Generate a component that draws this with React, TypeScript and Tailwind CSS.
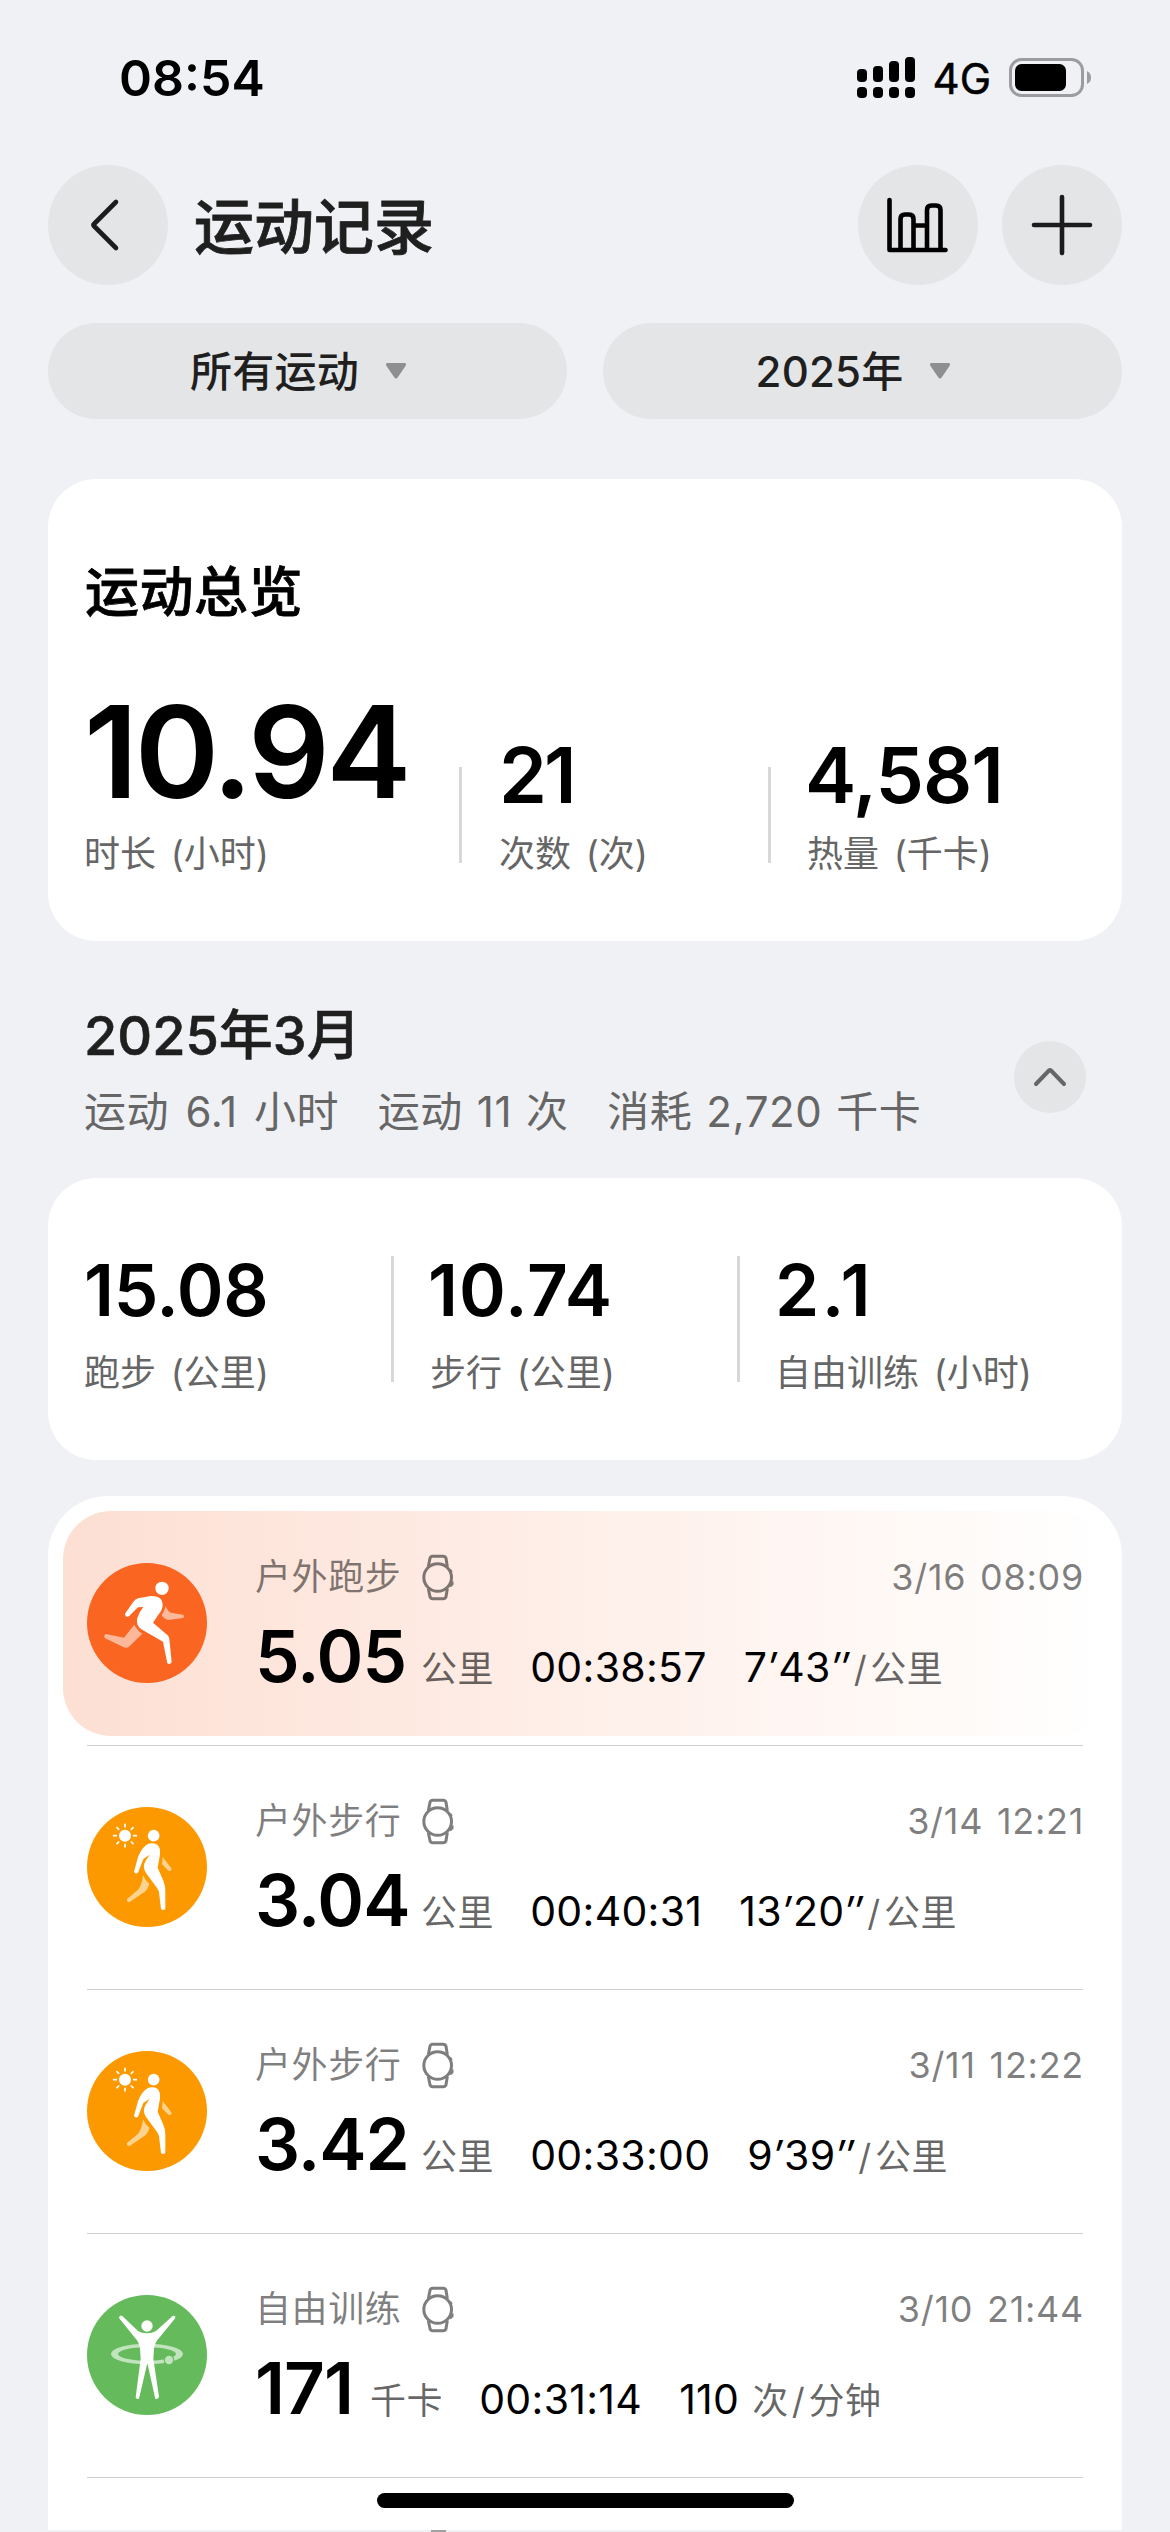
import React from "react";

type Activity = "run" | "walk" | "free";

interface Entry {
  kind: Activity;
  name: string;
  date: string;
  value: string;
  valueWidth: string;
  unit: string;
  time: string;
  rate: string[];
  rateUnit: [string, string];
}

const wide = "w-[152px]";
const narrow = "w-[101px]";

const entries: Entry[] = [
  { kind: "run", name: "户外跑步", date: "3/16 08:09", value: "5.05", valueWidth: wide, unit: "公里", time: "00:38:57", rate: ["7", "′", "43", "″"], rateUnit: ["", "公里"] },
  { kind: "walk", name: "户外步行", date: "3/14 12:21", value: "3.04", valueWidth: wide, unit: "公里", time: "00:40:31", rate: ["13", "′", "20", "″"], rateUnit: ["", "公里"] },
  { kind: "walk", name: "户外步行", date: "3/11 12:22", value: "3.42", valueWidth: wide, unit: "公里", time: "00:33:00", rate: ["9", "′", "39", "″"], rateUnit: ["", "公里"] },
  { kind: "free", name: "自由训练", date: "3/10 21:44", value: "171", valueWidth: narrow, unit: "千卡", time: "00:31:14", rate: ["110"], rateUnit: ["次", "分钟"] },
];

function RunIcon() {
  return (
    <svg viewBox="21 39 360 360" className="size-[120px] shrink-0">
      <circle cx="201" cy="219" r="180" fill="#fb6522" />
      <g fill="#fdb89a">
        <path d="M257 168 Q262 184 273 188 L309 194 Q316 199 309 204 L265 210 Q250 206 245 196 Q253 184 257 168Z" />
        <path d="M163 224 Q170 240 187 251 L147 290 Q140 296 130 291 L75 265 Q69 256 78 252 L132 263Z" />
      </g>
      <g fill="#fff">
        <circle cx="246" cy="115" r="20" />
        <path d="M174 145 L213 138 Q246 137 248 161 Q249 178 234 196 L219 218 L262 255 Q267 260 268 267 L275 337 Q270 345 262 340 L249 275 L184 238 Q166 225 172 204 Q178 185 190 171 L174 172 L147 199 Q136 204 135 191 L160 155 Q166 147 174 145Z" />
      </g>
    </svg>
  );
}

function WalkIcon() {
  return (
    <svg viewBox="21 771 360 360" className="size-[120px] shrink-0">
      <circle cx="201" cy="951" r="180" fill="#fd9900" />
      <circle cx="135" cy="857" r="18" fill="#fff" />
      <g stroke="#fff" strokeWidth="5" strokeLinecap="round">
        <path d="M135 823v8M135 883v8M101 857h8M161 857h8M111 833l5 5M154 876l5 5M159 833l-5 5M116 876l-5 5" />
      </g>
      <g fill="#fed28f">
        <path d="M248 921 L275 956 Q275 965 266 963 L246 943Z" />
        <path d="M189 976 Q194 990 208 1001 Q204 1018 193 1026 L149 1056 Q139 1057 141 1047 L174 1019 Q186 1005 189 976Z" />
      </g>
      <g fill="#fff">
        <circle cx="221" cy="857" r="17.5" />
        <path d="M206 881 Q221 877 232 884 Q242 893 240 913 L233 953 L250 992 Q256 1006 256 1022 L256 1076 Q250 1084 243 1077 L237 1027 Q235 1019 229 1011 L198 969 Q186 950 197 932 L209 914 L190 927 L174 968 Q166 974 162 965 L174 921 Q187 888 206 881Z" />
      </g>
    </svg>
  );
}

function FreeIcon() {
  return (
    <svg viewBox="51 44 360 360" className="size-[120px] shrink-0">
      <circle cx="231" cy="224" r="180" fill="#65bb5c" />
      <path
        fillRule="evenodd"
        fill="#c1e4be"
        d="M123 221 A108 31 0 1 0 339 221 A108 31 0 1 0 123 221Z M144 221 A87 20 0 1 1 318 221 A87 20 0 1 1 144 221Z"
      />
      <circle cx="297" cy="239" r="16" fill="#65bb5c" />
      <circle cx="297" cy="239" r="12.5" fill="#c1e4be" />
      <g fill="#fff">
        <circle cx="231" cy="137" r="17" />
        <path d="M147 113 Q149 103 157 107 L204 152 Q214 159 231 159 Q247 159 258 152 L308 107 Q317 104 316 113 L270 170 Q254 186 252 205 L250 235 L267 349 Q265 357 256 356 L232 248 L207 355 Q199 358 197 351 L212 235 L210 205 Q208 186 193 170Z" />
      </g>
    </svg>
  );
}

function WatchIcon() {
  return (
    <svg viewBox="1026 16 96 140" className="h-[47px] w-8 shrink-0 opacity-50" fill="none" stroke="#000" strokeWidth="9">
      <path d="M1045 54 L1050 28 Q1052 22 1058 22 H1089 Q1096 22 1098 28 L1102 54 M1045 119 L1050 144 Q1052 150 1058 150 H1089 Q1096 150 1098 144 L1102 119" />
      <circle cx="1073" cy="86" r="41.500" />
      <path d="M1110 62 L1115 70 M1117 98 V106 L1110 113" strokeWidth="7" />
    </svg>
  );
}

function ActivityIcon({ kind }: { kind: Activity }) {
  if (kind === "run") return <RunIcon />;
  if (kind === "walk") return <WalkIcon />;
  return <FreeIcon />;
}

function StatusBar() {
  return (
    <div className="flex h-[165px] shrink-0 justify-between pl-[119px] pr-[77px]">
      <div className="mt-[48px] h-[60px] text-[50px] leading-[60px] font-semibold text-black">08:54</div>
      <div className="mt-[56px] flex h-[44px]">
        <svg viewBox="0 0 58 42" className="h-[42px] w-[58px]">
          <rect x="0" y="13" width="10" height="13" rx="4" />
          <rect x="16" y="10" width="10" height="16" rx="4" />
          <rect x="32" y="5" width="10" height="21" rx="4" />
          <rect x="48" y="1" width="10" height="25" rx="4" />
          <rect x="0" y="31" width="10" height="11" rx="4" />
          <rect x="16" y="31" width="10" height="11" rx="4" />
          <rect x="32" y="31" width="10" height="11" rx="4" />
          <rect x="48" y="31" width="10" height="11" rx="4" />
        </svg>
        <div className="ml-[18px] text-[42px] leading-[46px] text-black [-webkit-text-stroke:0.5px_#000]">4G</div>
        <svg viewBox="0 0 84 42" className="ml-[18px] h-[42px] w-[84px]">
          <rect x="1.5" y="3.5" width="72" height="36" rx="11" fill="none" stroke="#9b9ba0" strokeWidth="3" />
          <rect x="6" y="8" width="51" height="27" rx="6.5" />
          <path d="M78 15 Q82 17 82 21.5 Q82 26 78 28Z" fill="#9b9ba0" />
        </svg>
      </div>
    </div>
  );
}

function Header() {
  return (
    <div className="flex h-[120px] shrink-0 items-center px-12">
      <div className="flex size-[120px] items-center justify-center rounded-full bg-[#e4e5e7]">
        <svg viewBox="0 0 120 120" className="size-[120px]" fill="none" stroke="#1c1c1e" strokeWidth="4.6" strokeLinecap="round" strokeLinejoin="round">
          <path d="M68 37 L46 59 Q45 60 46 61 L68 83" />
        </svg>
      </div>
      <div className="ml-[26px] pt-[4px] text-[60px] leading-[80px] font-medium text-[#1f1f1f] [-webkit-text-stroke:0.8px_#1f1f1f]">运动记录</div>
      <div className="ml-auto flex gap-6">
        <div className="flex size-[120px] items-center justify-center rounded-full bg-[#e4e5e7]">
          <svg viewBox="0 0 120 120" className="size-[120px]" fill="none" stroke="#000" strokeWidth="4.6" strokeLinecap="round" strokeLinejoin="round">
            <path d="M31.500 35 V85 H87.500 M42.500 84 V54 Q42.500 49.500 47 49.500 H51 Q55.500 49.500 55.500 54 V84 M55.500 60.500 H69 M69 84 V45 Q69 40.500 73.500 40.500 H78 Q82.500 40.500 82.500 45 V84" transform="translate(0 -35) scale(1 1) translate(0 35)" />
          </svg>
        </div>
        <div className="flex size-[120px] items-center justify-center rounded-full bg-[#e4e5e7]">
          <svg viewBox="0 0 120 120" className="size-[120px]" fill="none" stroke="#1c1c1e" strokeWidth="4.6" strokeLinecap="round">
            <path d="M60 32 V88 M32 60 H88" />
          </svg>
        </div>
      </div>
    </div>
  );
}

function Pill({ label }: { label: string }) {
  return (
    <div className="flex h-24 flex-1 items-center justify-center rounded-full bg-[#e4e5e7] pr-[19px]">
      <span className="pt-[2px] text-[42px] leading-[56px] font-medium tracking-[0.2px] text-[#1f1f1f]">{label}</span>
      <svg viewBox="0 0 20 16" className="ml-[27px] h-4 w-5" fill="#8e8f91">
        <path d="M2 0 H18 Q21 0 19.500 3 L12 14 Q10 17 8 14 L0.500 3 Q-1 0 2 0Z" />
      </svg>
    </div>
  );
}

function Label({ children }: { children: React.ReactNode }) {
  return <div className="h-12 text-[36px] leading-[48px] [word-spacing:4.5px] whitespace-nowrap text-[#666]">{children}</div>;
}

function Overview() {
  return (
    <div className="mt-[60px] flex h-[462px] shrink-0 flex-col rounded-[48px] bg-white px-9">
      <div className="mt-[78px] h-[72px] pl-px text-[54px] leading-[72px] font-medium tracking-[0.5px] text-black [-webkit-text-stroke:0.8px_#000]">运动总览</div>
      <div className="mt-[58px] flex">
        <div className="w-[375px]">
          <div className="h-[130px] text-[128px] leading-[130px] font-semibold tracking-[-3.500px] text-black">10.94</div>
          <div className="mt-[13px]">
            <Label>时长 (小时)</Label>
          </div>
        </div>
        <div className="mt-[80px] h-24 w-[3px] bg-[#d8d8d8]" />
        <div className="ml-[37px] mt-[44px] w-[269px]">
          <div className="h-[88px] text-[77px] leading-[88px] font-semibold tracking-[-3px] text-black">21</div>
          <div className="mt-[11px]">
            <Label>次数 (次)</Label>
          </div>
        </div>
        <div className="mt-[80px] h-24 w-[3px] bg-[#d8d8d8]" />
        <div className="ml-[36px] mt-[44px]">
          <div className="-ml-[2px] h-[88px] text-[77px] leading-[88px] font-semibold tracking-[-1px] text-black">4,581</div>
          <div className="mt-[11px]">
            <Label>热量 (千卡)</Label>
          </div>
        </div>
      </div>
    </div>
  );
}

function MonthHeader() {
  return (
    <div className="flex h-[237px] shrink-0 justify-between pr-9 pl-9">
      <div>
        <div className="mt-[59px] h-[72px] text-[54px] leading-[72px] font-medium text-[#1f1f1f] [-webkit-text-stroke:0.6px_#1f1f1f]">2025年3月</div>
        <div className="mt-[12px] flex h-[56px] gap-[38.500px] text-[42px] leading-[56px] tracking-[0.6px] whitespace-nowrap text-[#666]">
          <span className="[word-spacing:4px]">运动 6.1 小时</span>
          <span className="[word-spacing:1.5px]">运动 11 次</span>
          <span className="[word-spacing:1.5px]">消耗 2,720 千卡</span>
        </div>
      </div>
      <div className="mt-[100px] size-[72px] rounded-full bg-[#e4e5e7]">
        <svg viewBox="0 0 72 72" className="size-[72px]" fill="none" stroke="#666" strokeWidth="4" strokeLinecap="round" strokeLinejoin="round">
          <path d="M22 43 L35 29.500 Q36 28.500 37 29.500 L50 43" />
        </svg>
      </div>
    </div>
  );
}

function MonthStats() {
  return (
    <div className="flex h-[282px] shrink-0 rounded-[48px] bg-white px-9 pt-[66px]">
      <div className="w-[307px]">
        <div className="mt-[4px] h-[84px] text-[71px] leading-[84px] font-semibold tracking-[-0.300px] text-black">15.08</div>
        <div className="mt-[17px]">
          <Label>跑步 (公里)</Label>
        </div>
      </div>
      <div className="mt-3 h-[126px] w-[3px] bg-[#d8d8d8]" />
      <div className="ml-9 w-[307px]">
        <div className="-ml-[2px] mt-[4px] h-[84px] text-[71px] leading-[84px] font-semibold tracking-[1px] text-black">10.74</div>
        <div className="mt-[17px]">
          <Label>步行 (公里)</Label>
        </div>
      </div>
      <div className="mt-3 h-[126px] w-[3px] bg-[#d8d8d8]" />
      <div className="ml-[35px]">
        <div className="mt-[4px] h-[84px] text-[71px] leading-[84px] font-semibold tracking-[2.500px] text-black">2.1</div>
        <div className="mt-[17px]">
          <Label>自由训练 (小时)</Label>
        </div>
      </div>
    </div>
  );
}

function Rate({ parts }: { parts: string[] }) {
  return (
    <span className="ml-[37px] text-[41px] tracking-[0.300px] [font-feature-settings:'calt'_0]">
      {parts.map((part, i) => (
        <span key={i} className={i % 2 === 1 ? "mr-[1.500px] italic" : ""}>
          {part}
        </span>
      ))}
    </span>
  );
}

function Row({ entry, first }: { entry: Entry; first: boolean }) {
  return (
    <div className={first ? "mx-[15px] h-[225px] rounded-[48px] bg-gradient-to-r from-[#fddfd3] to-white px-6 pt-[52px]" : "mx-[39px] h-[243px] pt-[61px]"}>
      <div className="flex">
        <ActivityIcon kind={entry.kind} />
        <div className="ml-12 flex flex-1 flex-col">
          <div className="-mt-[10px] flex h-[48px] items-center text-black/50">
            <span className="text-[36px] leading-[48px] tracking-[0.6px]">{entry.name}</span>
            <div className="ml-[21px]">
              <WatchIcon />
            </div>
            <span className="-mr-px ml-auto text-[36px] leading-[48px] tracking-[0.700px] [word-spacing:3px] [font-feature-settings:'calt'_0]">{entry.date}</span>
          </div>
          <div className="mt-[13px] flex h-[84px] items-baseline whitespace-nowrap text-black">
            <span className={`${entry.valueWidth} text-[71px] leading-[84px] font-semibold tracking-[-1px]`}>{entry.value}</span>
            <span className="ml-[14px] text-[36px] tracking-[0.600px] text-black/60">{entry.unit}</span>
            <span className="ml-[36px] text-[41px] tracking-[0.300px] [font-feature-settings:'calt'_0]">{entry.time}</span>
            <Rate parts={entry.rate} />
            <span className={entry.rateUnit[0] ? "ml-[13px] text-[36px] tracking-[0.600px] text-black/60" : "text-[36px] tracking-[0.600px] text-black/60"}>
              {entry.rateUnit[0]}
              <span className="mx-[3px]">/</span>
              {entry.rateUnit[1]}
            </span>
          </div>
        </div>
      </div>
    </div>
  );
}

export default function App() {
  return (
    <div className="relative flex h-[2532px] w-[1170px] flex-col overflow-hidden bg-[#f0f1f5] font-['Inter','Noto_Sans_CJK_SC',sans-serif]">
      <StatusBar />
      <Header />
      <div className="mt-[38px] flex shrink-0 gap-9 px-12">
        <Pill label="所有运动" />
        <Pill label="2025年" />
      </div>
      <div className="flex flex-1 flex-col px-12">
        <Overview />
        <MonthHeader />
        <MonthStats />
        <div className="mt-9 h-[1034px] shrink-0 overflow-hidden rounded-t-[60px] bg-white pt-[15px]">
          {entries.map((entry, i) => (
            <div key={entry.date}>
              <Row entry={entry} first={i === 0} />
              <div className={i === 0 ? "mx-[39px] mt-[9px] h-px bg-[#cfcfcf]" : "mx-[39px] h-px bg-[#cfcfcf]"} />
            </div>
          ))}
        </div>
      </div>
      <div className="absolute bottom-[24px] left-[377px] h-[15px] w-[417px] rounded-full bg-black" />
      <div className="absolute bottom-0 left-[431px] h-[2px] w-[15px] bg-[#a0a0a0]" />
    </div>
  );
}
